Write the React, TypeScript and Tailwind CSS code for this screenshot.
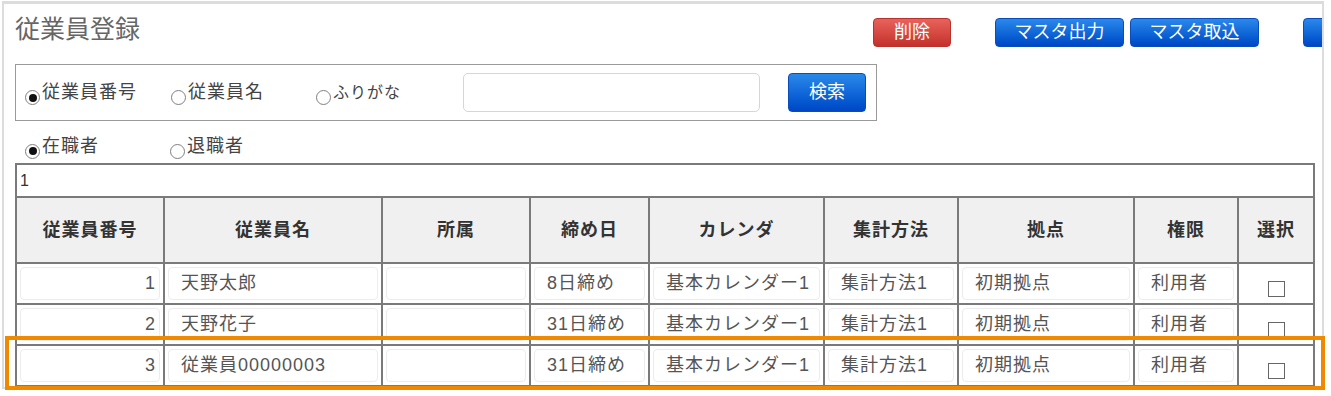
const FONT = "font-['Liberation_Sans','Noto_Sans_CJK_JP',sans-serif]";

type Row = {
  no: string;
  name: string;
  dept: string;
  close: string;
  calendar: string;
  method: string;
  base: string;
  role: string;
};

const rows: Row[] = [
  { no: '1', name: '天野太郎', dept: '', close: '8日締め', calendar: '基本カレンダー1', method: '集計方法1', base: '初期拠点', role: '利用者' },
  { no: '2', name: '天野花子', dept: '', close: '31日締め', calendar: '基本カレンダー1', method: '集計方法1', base: '初期拠点', role: '利用者' },
  { no: '3', name: '従業員00000003', dept: '', close: '31日締め', calendar: '基本カレンダー1', method: '集計方法1', base: '初期拠点', role: '利用者' },
  { no: '', name: '', dept: '', close: '', calendar: '', method: '', base: '', role: '' },
];

function Radio({ checked, label, className = '', textClass = 'text-[18px]' }: { checked?: boolean; label: string; className?: string; textClass?: string }) {
  return (
    <div className={`flex items-center shrink-0 ${className}`}>
      <span className="mt-[10px] flex h-[15px] w-[15px] items-center justify-center rounded-full border border-[#808080] bg-white">
        {checked && <span className="h-[8px] w-[8px] rounded-full bg-[#111]" />}
      </span>
      <span className={`ml-[2px] text-[#444] tracking-[1px] ${textClass}`}>{label}</span>
    </div>
  );
}

function Btn({ label, red, className = '' }: { label: string; red?: boolean; className?: string }) {
  return (
    <div
      className={`flex h-[29px] shrink-0 items-center justify-center rounded-[4px] text-[18px] text-white ${
        red
          ? 'bg-linear-to-b from-[#e8625b] to-[#c4302b] border border-[#b8322d]'
          : 'bg-linear-to-b from-[#2a88ea] to-[#0046c6] border border-[#0a4cba]'
      } ${className}`}
    >
      {label}
    </div>
  );
}

function Cell({ children, align = 'left' }: { children?: React.ReactNode; align?: 'left' | 'right' }) {
  return (
    <td className="border-2 border-[#7a7a7a] p-[3px] align-middle">
      <div
        className={`flex h-[33px] items-center rounded-[4px] border border-[#ececec] text-[18px] text-[#555] tracking-[1px] whitespace-nowrap overflow-hidden ${
          align === 'right' ? 'justify-end pr-[3px]' : 'pl-[12px]'
        }`}
      >
        {children}
      </div>
    </td>
  );
}

const headers = ['従業員番号', '従業員名', '所属', '締め日', 'カレンダ', '集計方法', '拠点', '権限', '選択'];

export default function App() {
  return (
    <div className={`relative h-[396px] w-[1331px] overflow-hidden bg-white ${FONT}`}>
      <div className="ml-[2px] mt-[1px] h-[388px] w-[1322px] overflow-hidden border-x-2 border-t-[3px] border-b-2 border-[#dcdcdc] pl-[11px]">
        {/* header */}
        <div className="flex h-[44px]">
          <div className="mt-[10px] w-[858px] shrink-0 text-[25px] leading-[30px] text-[#666]">従業員登録</div>
          <Btn red label="削除" className="mt-[14px] w-[78px]" />
          <Btn label="マスタ出力" className="ml-[44px] mt-[14px] w-[129px]" />
          <Btn label="マスタ取込" className="ml-[6px] mt-[14px] w-[129px]" />
          <Btn label="" className="ml-[44px] mt-[14px] w-[129px]" />
        </div>

        {/* search box */}
        <div className="mt-[16px] flex h-[57px] w-[862px] items-center border border-[#9a9a9a] pl-[9px]">
          <Radio checked label="従業員番号" className="w-[146px]" />
          <Radio label="従業員名" className="w-[145px]" />
          <Radio label="ふりがな" className="w-[147px]" textClass="text-[16px]" />
          <div className="h-[39px] w-[297px] shrink-0 rounded-[5px] border border-[#d6d6d6] bg-white" />
          <Btn label="検索" className="ml-[28px] h-[39px] w-[78px]" />
        </div>

        {/* status radios */}
        <div className="flex h-[42px] items-center pl-[10px] pt-[8px]">
          <Radio checked label="在職者" className="w-[145px]" />
          <Radio label="退職者" />
        </div>

        {/* table */}
        <table className="w-[1298px] table-fixed border-collapse">
          <colgroup>
            <col className="w-[148px]" />
            <col className="w-[218px]" />
            <col className="w-[148px]" />
            <col className="w-[119px]" />
            <col className="w-[175px]" />
            <col className="w-[134px]" />
            <col className="w-[176px]" />
            <col className="w-[104px]" />
            <col className="w-[76px]" />
          </colgroup>
          <tbody>
            <tr className="h-[33px]">
              <td colSpan={9} className="border-2 border-[#7a7a7a] pl-[3px] text-left text-[16px] text-[#333]">
                1
              </td>
            </tr>
            <tr className="h-[66px]">
              {headers.map((h) => (
                <th key={h} className="border-2 border-[#7a7a7a] bg-[#f0f0f0] text-center text-[18px] font-bold tracking-[1px] text-[#333]">
                  {h}
                </th>
              ))}
            </tr>
            {rows.map((r, i) => (
              <tr key={i} className="h-[40px]">
                <Cell align="right">{r.no}</Cell>
                <Cell>{r.name}</Cell>
                <Cell>{r.dept}</Cell>
                <Cell>{r.close}</Cell>
                <Cell>{r.calendar}</Cell>
                <Cell>{r.method}</Cell>
                <Cell>{r.base}</Cell>
                <Cell>{r.role}</Cell>
                <td className="border-2 border-[#7a7a7a] align-middle">
                  <div className="flex justify-center pt-[10px]">
                    <span className="h-[16px] w-[17px] border border-[#666] bg-white" />
                  </div>
                </td>
              </tr>
            ))}
          </tbody>
        </table>
      </div>

      {/* highlight annotation */}
      <div className="absolute left-[5px] top-[336px] h-[54px] w-[1320px] border-4 border-[#ef8a00]" />
    </div>
  );
}
